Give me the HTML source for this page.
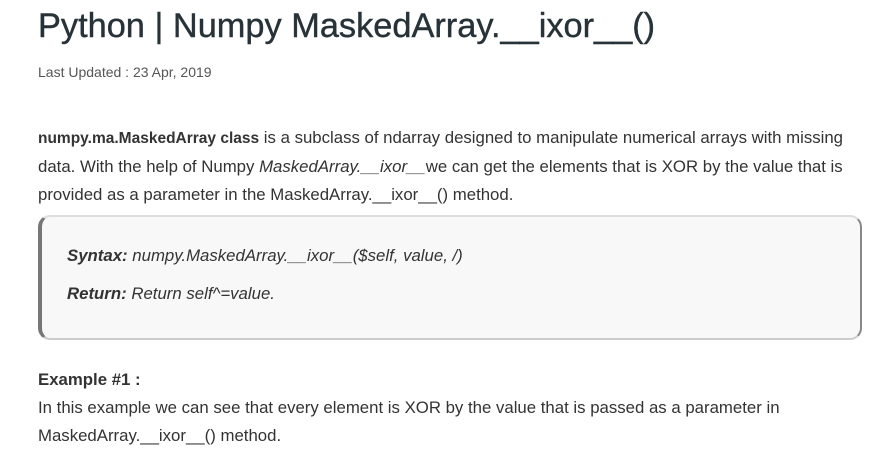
<!DOCTYPE html>
<html><head><meta charset="utf-8"><style>
body{margin:0;background:#fff;width:890px;height:461px;overflow:hidden;font-family:"Liberation Sans",sans-serif;color:#273239}
.t{position:absolute;left:38px;top:7px;font-size:34px;font-weight:normal;-webkit-text-stroke:0.4px #273239;color:#273239;white-space:nowrap;transform:scaleX(1.01);transform-origin:left}
.d{position:absolute;left:38px;top:64px;font-size:14px;color:#555}
.p{position:absolute;left:38px;font-size:16.8px;line-height:28px;white-space:nowrap;color:#333}
.box{position:absolute;left:38px;top:215px;width:818px;height:121px;background:#f8f8f8;border:2px solid #888;border-left:4px solid #777;border-top-color:#ddd;border-bottom-color:#ccc;border-radius:12px}
.s{position:absolute;left:67px;font-size:16.8px;font-style:italic;color:#333;white-space:nowrap}
</style></head><body>
<div class="t">Python | Numpy MaskedArray.__ixor__()</div>
<div class="d">Last Updated : 23 Apr, 2019</div>
<div class="p" style="top:124px"><b style="font-size:15.5px">numpy.ma.MaskedArray class</b> is a subclass of ndarray designed to manipulate numerical arrays with missing<br>data. With the help of Numpy <i>MaskedArray.__ixor__</i>we can get the elements that is XOR by the value that is<br>provided as a parameter in the MaskedArray.__ixor__() method.</div>
<div class="box"></div>
<div class="s" style="top:246px"><b>Syntax:</b> numpy.MaskedArray.__ixor__($self, value, /)</div>
<div class="s" style="top:284px"><b>Return:</b> Return self^=value.</div>
<div class="p" style="top:366px"><b>Example #1 :</b><br>In this example we can see that every element is XOR by the value that is passed as a parameter in<br>MaskedArray.__ixor__() method.</div>
</body></html>
